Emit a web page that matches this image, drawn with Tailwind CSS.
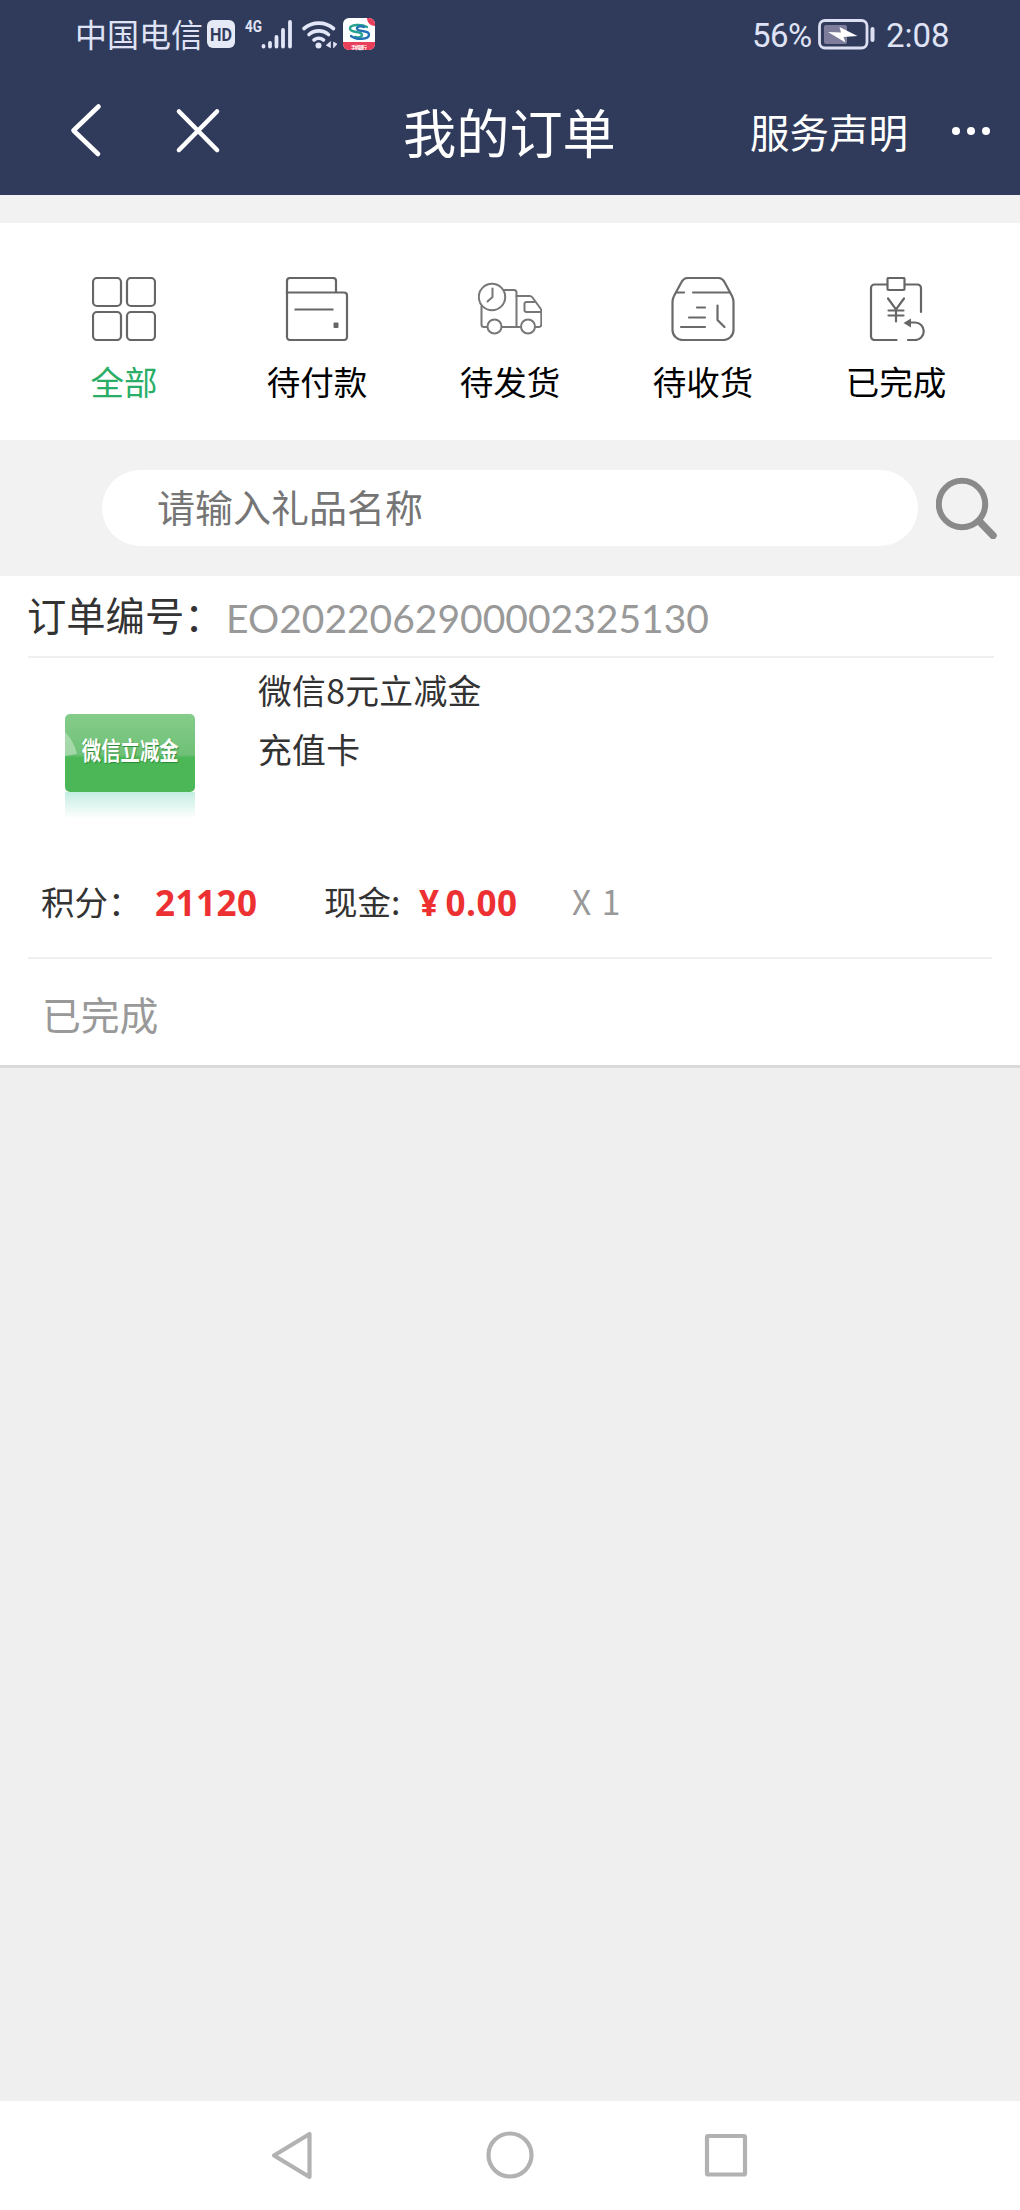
<!DOCTYPE html>
<html lang="zh-CN">
<head>
  <meta charset="UTF-8" />
  <title>我的订单</title>
  <script src="https://cdn.jsdelivr.net/npm/@tailwindcss/browser@4"></script>
</head>
<body class="w-[1020px] h-[2210px] flex flex-col bg-[#efefef] font-['Noto_Sans_CJK_SC',sans-serif] whitespace-nowrap overflow-hidden">

  <header class="h-[195px] bg-[#303b5c] shrink-0">
    <!-- status bar -->
    <div class="h-[70px] flex items-center pl-[75px] text-[#dfe3f5]">
      <span class="text-[32px] leading-[66px] h-[70px] w-[132px]">中国电信</span>
      <svg class="w-[172px] h-[70px]" viewBox="207 0 172 70" fill="none">
        <rect x="207" y="20" width="28" height="28" rx="6" fill="#e6e9f6" />
        <text x="221" y="41" text-anchor="middle" font-family="Roboto" font-weight="700" font-size="18" textLength="22" lengthAdjust="spacingAndGlyphs" fill="#303b5c">HD</text>
        <text x="245" y="32" font-family="Roboto" font-weight="700" font-size="17" textLength="17" lengthAdjust="spacingAndGlyphs" fill="#dfe3f5">4G</text>
        <g stroke="#e3e6f6" stroke-width="3.8" stroke-linecap="round">
          <path d="M263.5 46v.5M270 43v3.5M276.500 37v9.500M283 30v16.500M290 22v24.500" />
        </g>
        <g stroke="#e3e6f6" stroke-width="3.600" stroke-linecap="round">
          <path d="M304 28.500a23 23 0 0 1 29.500 0M309 34.500a15 15 0 0 1 19.500 0M314 40a8 8 0 0 1 9.500 0" />
        </g>
        <circle cx="318.500" cy="45.500" r="3" fill="#e3e6f6" />
        <path d="M326 45.500l4.500-4v6.500M337 44l-3.500-2v6z" fill="#e3e6f6" stroke="#e3e6f6" stroke-width=".6" />
        <rect x="343" y="18" width="32" height="32" rx="6" fill="#fff" />
        <path d="M343 42h32v2a6 6 0 0 1-6 6h-20a6 6 0 0 1-6-6z" fill="#ea3f5b" />
        <path d="M367 18h2a6 6 0 0 1 6 6v2c-4 0-8-3-8-8z" fill="#ea3f5b" />
        <text x="359" y="48.500" text-anchor="middle" font-family="Noto Sans CJK SC" font-weight="700" font-size="5" textLength="16" fill="#fff">手机银行</text>
        <path d="M367 27c-5-3-17-3-17 1.500 0 5 12 2 12 6.500 0 2-4 3-7 2" stroke="#25a38e" stroke-width="2.400" stroke-linecap="round" />
        <path d="M351 36c5 4 18 4 18-1.500 0-5-12-2-12-6 0-2 4-3 7-1.500" stroke="#2272b4" stroke-width="2.400" stroke-linecap="round" />
      </svg>
      <span class="ml-[373px] w-[65px] h-[70px] text-[33px] leading-[71px] font-['Roboto',sans-serif] tracking-[-0.5px]">56%</span>
      <svg class="w-[60px] h-[70px]" viewBox="816 0 60 70" fill="none">
        <rect x="818.500" y="20.500" width="47.500" height="27.500" rx="5.500" stroke="#dcdff2" stroke-width="2.800" />
        <rect x="823" y="25" width="23" height="19" rx="2" fill="#7e7e9c" />
        <path d="M827 32l13 .5-1.500-5.500 18 9-14 1 2 5.500z" fill="#fff" />
        <path d="M871.500 29v11" stroke="#dcdff2" stroke-width="4" stroke-linecap="round" />
      </svg>
      <span class="ml-[9px] h-[70px] text-[33px] leading-[71px] font-['Roboto',sans-serif]">2:08</span>
    </div>

    <!-- title bar -->
    <div class="h-[125px] flex items-center text-white">
      <svg class="w-[230px] h-[125px]" viewBox="0 70 230 125" fill="none" stroke="#fff" stroke-linecap="round" stroke-linejoin="round">
        <path d="M98.500 106.500L73.500 130.500l24.500 23.500" stroke-width="4.600" />
        <path d="M179 111.500l38 38.500M217 111.500l-38 38.500" stroke-width="4.600" />
      </svg>
      <h1 class="ml-[173px] h-[125px] w-[347px] text-[53.2px] leading-[122px]">我的订单</h1>
      <span class="h-[125px] w-[190px] text-[39.5px] leading-[122px]">服务声明</span>
      <svg class="w-[60px] h-[125px]" viewBox="940 70 60 125" fill="#fff">
        <circle cx="956" cy="131" r="4" />
        <circle cx="971" cy="131" r="4" />
        <circle cx="986" cy="131" r="4" />
      </svg>
    </div>
  </header>

  <!-- order tabs -->
  <div class="h-[28px] shrink-0 bg-[#f2f2f2]"></div>
  <nav class="h-[217px] shrink-0 bg-white px-[27.5px] pt-[54px] grid grid-cols-5 justify-items-center content-start text-[33.5px] leading-[50px] text-black">
    <a class="flex flex-col items-center gap-[15px] text-[#2aae67]">
      <svg class="w-[64px] h-[64px]" viewBox="92 277 64 64" fill="none" stroke="#666" stroke-width="2.200">
        <rect x="93" y="278" width="28" height="28" rx="4" />
        <rect x="127" y="278" width="28" height="28" rx="4" />
        <rect x="93" y="312" width="28" height="28" rx="4" />
        <rect x="127" y="312" width="28" height="28" rx="4" />
      </svg>
      <span>全部</span>
    </a>
    <a class="flex flex-col items-center gap-[15px]">
      <svg class="w-[64px] h-[64px]" viewBox="285 277 64 64" fill="none" stroke="#666" stroke-width="2.200">
        <path d="M287 294v-13a3 3 0 0 1 3-3h43a3 3 0 0 1 3 3v11" />
        <path d="M287 292.500h57a3 3 0 0 1 3 3v41a3 3 0 0 1-3 3.500h-54a3 3 0 0 1-3-3.500z" />
        <path d="M294.500 309.500h39" />
        <rect x="333.500" y="322.500" width="5" height="5.500" rx="1" fill="#666" stroke="none" />
      </svg>
      <span>待付款</span>
    </a>
    <a class="flex flex-col items-center gap-[15px]">
      <svg class="w-[64px] h-[64px]" viewBox="478 277 64 64" fill="none" stroke="#777" stroke-width="2" stroke-linecap="round" stroke-linejoin="round">
        <circle cx="492" cy="297" r="13.200" />
        <path d="M492.500 288.500v8.500l-5 4.500" />
        <path d="M504 290h10a2.500 2.500 0 0 1 2.500 2.500V326.500M481.500 306v18.500a2.500 2.500 0 0 0 2.500 2.500h3M502 327h18" />
        <circle cx="494.500" cy="326.500" r="7" />
        <circle cx="528" cy="326.500" r="7" />
        <path d="M516.500 296h13a4 4 0 0 1 3 1.500l8 11q.800 1 .800 2.500v13.500a2.500 2.500 0 0 1-2.500 2.500h-3.300" />
        <path d="M534.500 302h-8a2 2 0 0 0-2 2v6a2 2 0 0 0 2 2h14.500" />
      </svg>
      <span>待发货</span>
    </a>
    <a class="flex flex-col items-center gap-[15px]">
      <svg class="w-[64px] h-[64px]" viewBox="671.5 277 64 64" fill="none" stroke="#6a6a6a" stroke-width="2.200" stroke-linecap="round" stroke-linejoin="round">
        <path d="M673 302q0-3 1.500-6l7-13q2.500-5 7-5h30q4.500 0 7 5l7 13q1.500 3 1.500 6v28a10 10 0 0 1-10 10h-41a10 10 0 0 1-10-10z" />
        <path d="M677 292.500h7.500M693.500 292.500h37M697.500 307.500h8M689.500 317.500h16M681.500 327h24M718 305.500v14.500l7 7" />
      </svg>
      <span>待收货</span>
    </a>
    <a class="flex flex-col items-center gap-[15px]">
      <svg class="w-[64px] h-[64px]" viewBox="864 277 64 64" fill="none" stroke="#666" stroke-width="2.200" stroke-linecap="round">
        <rect x="887.500" y="278" width="17" height="12" rx="1" />
        <path d="M887 284.500h-12.500a3.500 3.500 0 0 0-3.500 3.500v48.500a3.500 3.500 0 0 0 3.500 3.500h22M905 284.500h12.500a3.500 3.500 0 0 1 3.500 3.500v24" />
        <path d="M888 298.500l8 11 8-11M896 309.500v12M888.500 310.500h15M888.500 315.500h15" />
        <path d="M908 340h7a8.700 8.700 0 0 0 0-17.500h-5" />
        <path d="M903.500 323l7.500-4.500v9z" fill="#666" stroke="none" />
      </svg>
      <span>已完成</span>
    </a>
  </nav>

  <!-- search -->
  <div class="h-[136px] shrink-0 bg-[#f2f2f2] flex items-center pl-[102px]">
    <div class="w-[816px] h-[76px] rounded-full bg-white pl-[55px] text-[38px] leading-[71px] text-[#757575]">请输入礼品名称</div>
    <svg class="ml-[18px] w-[62px] h-[62px]" viewBox="936 477 62 62" fill="none" stroke="#8a8a8a" stroke-linecap="round">
      <circle cx="962" cy="504" r="23.200" stroke-width="6" />
      <path d="M980 522l13 13.500" stroke-width="7.500" />
    </svg>
  </div>

  <!-- order -->
  <section class="h-[492px] shrink-0 bg-white border-b-3 border-[#dadada] text-[#333]">
    <div class="ml-[28px] mr-[26px] h-[82px] border-b-2 border-[#efefef] flex text-[39.3px] leading-[76px]">
      <span class="w-[198px] -ml-px mr-px">订单编号：</span>
      <span class="font-['Lato',sans-serif] text-[39px] leading-[84px] text-[#999]">EO2022062900002325130</span>
    </div>

    <div class="h-[212px] flex pl-[65px]">
      <div class="w-[130px] mt-[56px]">
        <div class="h-[78px] rounded-[5px] overflow-hidden relative bg-linear-to-b from-[#85cc8a] from-0% via-[#6fc177] via-52% to-[#4bb757] to-56% flex items-center justify-center">
          <svg class="absolute left-0 top-0 w-[130px] h-[78px]" viewBox="0 0 130 78">
            <path d="M0 18Q9 27 12 40L0 42z" fill="#fff" fill-opacity=".35" />
          </svg>
          <span class="relative -top-[3px] text-[24.5px] leading-none font-bold text-white scale-x-[0.79] [text-shadow:1px_1px_1px_#2c8a3a]">微信立减金</span>
        </div>
        <div class="h-[27px] bg-linear-to-b from-[#c4ede2] to-white"></div>
      </div>
      <div class="ml-[63px] pt-[2px] text-[33.8px] leading-[59px] tracking-[0.3px]">
        <p>微信8元立减金</p>
        <p>充值卡</p>
      </div>
    </div>

    <div class="ml-[28px] mr-[28px] h-[89px] border-b-2 border-[#efefef] flex text-[33.5px] leading-[61px] pl-[13px]">
      <span class="w-[114px]">积分：</span>
      <b class="w-[169px] font-['Open_Sans',sans-serif] text-[35px] leading-[65px] tracking-[0.5px] text-[#ed3133]">21120</b>
      <span class="w-[95px]">现金:</span>
      <b class="w-[153px] font-['Open_Sans',sans-serif] text-[35px] leading-[65px] tracking-[0.5px] text-[#ed3133] flex gap-[6px]"><span>¥</span><span>0.00</span></b>
      <span class="text-[#999] leading-[62px] tracking-[1.5px]">X 1</span>
    </div>

    <div class="pl-[42px] text-[38.8px] leading-[108px] text-[#999]">已完成</div>
  </section>

  <!-- system navigation -->
  <footer class="mt-auto h-[109px] shrink-0 bg-white">
    <svg class="w-[1020px] h-[109px]" viewBox="0 2101 1020 109" fill="none" stroke="#b2b2b2" stroke-width="4.200" stroke-linejoin="round">
      <path d="M274 2155.500L309.500 2134v43z" />
      <circle cx="510" cy="2155" r="21.500" />
      <rect x="707" y="2136" width="38" height="38.500" rx="1" />
    </svg>
  </footer>
</body>
</html>
